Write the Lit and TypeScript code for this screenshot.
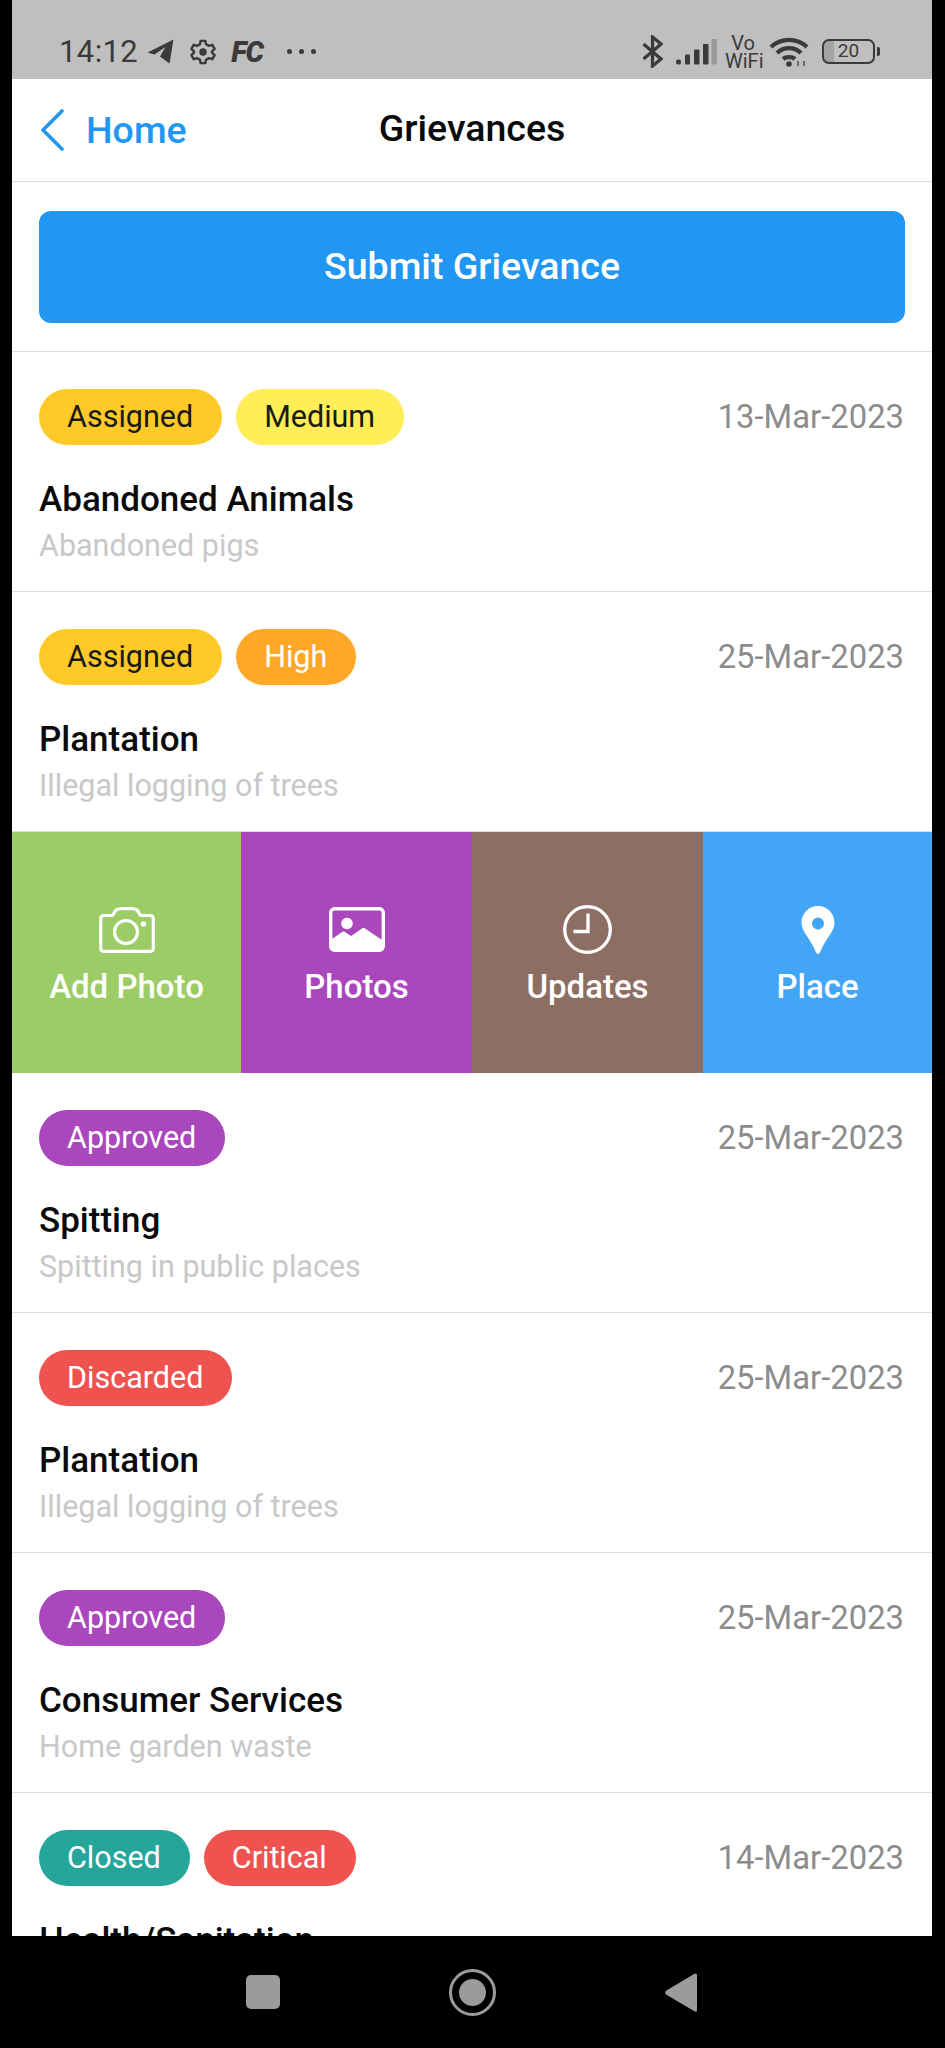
import { LitElement, html, css, svg } from 'lit';
import { customElement } from 'lit/decorators.js';

type Chip = { label: string; color: string; dark?: boolean };
type Grievance = { chips: Chip[]; date: string; title: string; desc?: string; actions?: boolean };

const ASSIGNED: Chip = { label: 'Assigned', color: '#ffca28', dark: true };
const MEDIUM: Chip = { label: 'Medium', color: '#ffee58', dark: true };
const HIGH: Chip = { label: 'High', color: '#ffa726' };
const APPROVED: Chip = { label: 'Approved', color: '#ab47bc' };
const DISCARDED: Chip = { label: 'Discarded', color: '#ef5350' };
const CLOSED: Chip = { label: 'Closed', color: '#26a69a' };
const CRITICAL: Chip = { label: 'Critical', color: '#ef5350' };

const grievances: Grievance[] = [
  { chips: [ASSIGNED, MEDIUM], date: '13-Mar-2023', title: 'Abandoned Animals', desc: 'Abandoned pigs' },
  { chips: [ASSIGNED, HIGH], date: '25-Mar-2023', title: 'Plantation', desc: 'Illegal logging of trees', actions: true },
  { chips: [APPROVED], date: '25-Mar-2023', title: 'Spitting', desc: 'Spitting in public places' },
  { chips: [DISCARDED], date: '25-Mar-2023', title: 'Plantation', desc: 'Illegal logging of trees' },
  { chips: [APPROVED], date: '25-Mar-2023', title: 'Consumer Services', desc: 'Home garden waste' },
  // last row runs under the nav bar, only the top of its title shows
  { chips: [CLOSED, CRITICAL], date: '14-Mar-2023', title: 'Health/Sanitation' },
];

const cameraIcon = svg`<svg width="56" height="46" viewBox="0 0 56 46" fill="none" stroke="#fff" stroke-width="3.200" stroke-linejoin="round">
  <path d="M5 8.500H12.500C13.500 8.500 14 8 14.500 7C16 3 19 1.700 22 1.700H33C36 1.700 39 3 40.500 7C41 8 41.500 8.500 42.500 8.500H51C53.500 8.500 54.300 9.500 54.300 12V41C54.300 43.500 53.500 44.300 51 44.300H5C2.500 44.300 1.700 43.500 1.700 41V12C1.700 9.500 2.500 8.500 5 8.500Z"/>
  <circle cx="27" cy="25" r="11.500"/>
  <circle cx="44.500" cy="17" r="2.800" fill="#fff" stroke="none"/>
</svg>`;

const photosIcon = svg`<svg width="56" height="45" viewBox="0 0 56 45">
  <rect x="1.700" y="1.700" width="52.600" height="41.600" rx="4" fill="none" stroke="#fff" stroke-width="3.400"/>
  <circle cx="18" cy="16.500" r="5.800" fill="#fff"/>
  <path d="M3 32L13 25C14 24.400 15 24.400 16 25L22 29L33 21.500C34 20.900 35 20.900 36 21.500L53 33V40C53 42.500 52 44 50 44H6C4 44 3 42.500 3 40Z" fill="#fff"/>
</svg>`;

const clockIcon = svg`<svg width="49" height="49" viewBox="0 0 49 49" fill="none" stroke="#fff" stroke-width="3.300">
  <circle cx="24.500" cy="24.500" r="22.800"/>
  <path d="M25 8.500V26.500H10.500"/>
</svg>`;

const pinIcon = svg`<svg width="34" height="48" viewBox="0 0 34 48">
  <path fill="#fff" fill-rule="evenodd" d="M17 0C7.600 0 0.500 7.400 0.500 17C0.500 26 10 33 15 46.500C15.700 48.300 18.300 48.300 19 46.500C24 33 33.500 26 33.500 17C33.500 7.400 26.400 0 17 0ZM17 11.500A6 6 0 1 1 17 23.500A6 6 0 1 1 17 11.500Z"/>
</svg>`;

const actions = [
  { label: 'Add Photo', color: '#9ccc65', icon: cameraIcon },
  { label: 'Photos', color: '#ab47bc', icon: photosIcon },
  { label: 'Updates', color: '#8d6e63', icon: clockIcon },
  { label: 'Place', color: '#42a5f5', icon: pinIcon },
];

@customElement('app-root')
export class AppRoot extends LitElement {
  static styles = css`
    :host {
      display: flex;
      flex-direction: column;
      height: 2048px;
      background: #000;
      font-family: Roboto, 'Liberation Sans', sans-serif;
      overflow: hidden;
    }
    .screen {
      flex: 1;
      min-height: 0;
      margin: 0 13px 0 12px;
      display: flex;
      flex-direction: column;
      background: #fff;
      overflow: hidden;
    }
    .status {
      flex: 0 0 79px;
      box-sizing: border-box;
      background: #bfbfbf;
      color: #3a3a3a;
      display: flex;
      align-items: center;
      padding: 24px 0 0 47px;
    }
    .time {
      font-size: 31px;
      letter-spacing: 0.4px;
    }
    .status svg {
      display: block;
      flex: none;
    }
    .plane {
      margin-left: 9px;
    }
    .gear {
      margin-left: 16px;
    }
    .fc {
      font-size: 29px;
      font-weight: 900;
      font-style: italic;
      margin-left: 15px;
      letter-spacing: -1px;
    }
    .dots {
      display: flex;
      gap: 7px;
      margin-left: 24px;
    }
    .dots i {
      width: 5px;
      height: 5px;
      border-radius: 50%;
      background: #3a3a3a;
    }
    .status-right {
      margin-left: auto;
      margin-right: 52px;
      display: flex;
      align-items: center;
      gap: 8px;
    }
    .signal {
      margin-left: 5px;
    }
    .vowifi {
      width: 36px;
      font-size: 20px;
      line-height: 18px;
      text-align: center;
      white-space: nowrap;
    }
    .battery {
      width: 53px;
      height: 25px;
      margin-left: 5px;
      box-sizing: border-box;
      border: 2.500px solid #3a3a3a;
      border-radius: 7px;
      font-size: 19px;
      line-height: 20px;
      text-align: center;
      background: linear-gradient(90deg, #a3a3a3 0 10px, transparent 10px);
    }
    .battery-tip {
      width: 3px;
      height: 9px;
      margin-left: -6px;
      background: #3a3a3a;
      border-radius: 0 2px 2px 0;
    }
    .header {
      flex: 0 0 103px;
      position: relative;
      display: flex;
      align-items: center;
      justify-content: center;
      border-bottom: 1.500px solid #dcdcdc;
      box-sizing: border-box;
    }
    .back {
      position: absolute;
      left: 28px;
      top: 29px;
      display: flex;
      align-items: center;
      gap: 22px;
      color: #2196f3;
      font-size: 37.500px;
      font-weight: 500;
    }
    .title {
      font-size: 37.500px;
      font-weight: 500;
      color: #0a0a0a;
      margin-top: -4px;
    }
    .submit-wrap {
      flex: none;
      padding: 29px 27px 27.500px;
      border-bottom: 1.500px solid #dcdcdc;
    }
    .submit {
      height: 112px;
      border-radius: 12px;
      background: #2196f3;
      color: #fff;
      font-size: 37.500px;
      font-weight: 500;
      display: flex;
      align-items: center;
      justify-content: center;
      padding-bottom: 2px;
      box-sizing: border-box;
    }
    .row {
      flex: none;
      box-sizing: border-box;
      height: 240px;
      padding: 37px 28px 0 27px;
      border-bottom: 1.500px solid #dcdcdc;
    }
    .row-top {
      display: flex;
      align-items: center;
      gap: 14px;
    }
    .chip {
      height: 56px;
      padding: 0 29px 0 28px;
      border-radius: 28px;
      color: #fff;
      font-size: 30.500px;
      display: flex;
      align-items: center;
    }
    .chip.dark {
      color: #1a1a1a;
    }
    .date {
      margin-left: auto;
      color: #8c8c8c;
      font-size: 32.800px;
    }
    .row-title {
      margin-top: 35px;
      font-size: 35px;
      line-height: 40px;
      font-weight: 500;
      color: #0a0a0a;
    }
    .row-desc {
      margin-top: 8px;
      font-size: 30.500px;
      line-height: 36px;
      color: #c8c8c8;
    }
    .strip {
      flex: none;
      height: 241px;
      display: grid;
      grid-template-columns: 229px 231px 231px 229px;
    }
    .action {
      display: flex;
      flex-direction: column;
      align-items: center;
      color: #fff;
      font-size: 33px;
      font-weight: 500;
      padding-top: 73px;
      box-sizing: border-box;
    }
    .action .icon {
      height: 50px;
      display: flex;
      align-items: center;
      margin-bottom: 12px;
    }
    .nav {
      flex: 0 0 112px;
      background: #000;
      display: flex;
      align-items: center;
      justify-content: center;
      gap: 169px;
      padding-right: 3px;
    }
    .nav svg {
      display: block;
    }
  `;

  render() {
    return html`
      <div class="screen">
        ${this.renderStatus()}
        <div class="header">
          <div class="back">
            <svg width="24" height="42" viewBox="0 0 24 42" fill="none" stroke="#2196f3" stroke-width="3.600" stroke-linecap="round" stroke-linejoin="round"><path d="M22 2L3 21L22 40"/></svg>
            <span>Home</span>
          </div>
          <div class="title">Grievances</div>
        </div>
        <div class="submit-wrap"><div class="submit">Submit Grievance</div></div>
        ${grievances.map((g) => html`
          <div class="row">
            <div class="row-top">
              ${g.chips.map((c) => html`<span class="chip ${c.dark ? 'dark' : ''}" style="background:${c.color}">${c.label}</span>`)}
              <span class="date">${g.date}</span>
            </div>
            <div class="row-title">${g.title}</div>
            ${g.desc ? html`<div class="row-desc">${g.desc}</div>` : ''}
          </div>
          ${g.actions ? this.renderStrip() : ''}
        `)}
      </div>
      <div class="nav">
        <svg width="34" height="34" viewBox="0 0 34 34"><rect width="34" height="34" rx="5" fill="#9b9b9b"/></svg>
        <svg width="47" height="47" viewBox="0 0 47 47"><circle cx="23.500" cy="23.500" r="22" fill="none" stroke="#9b9b9b" stroke-width="3"/><circle cx="23.500" cy="23.500" r="13.500" fill="#9b9b9b"/></svg>
        <svg width="32" height="39" viewBox="0 0 32 39"><path d="M32 2V37C32 39 30.500 39.300 29 38L1 21.500C0 20.800 0 18.500 1 17.800L29 1C30.500 0 32 0.300 32 2Z" fill="#9b9b9b"/></svg>
      </div>
    `;
  }

  private renderStrip() {
    return html`<div class="strip">
      ${actions.map((a) => html`
        <div class="action" style="background:${a.color}">
          <div class="icon">${a.icon}</div>
          <span>${a.label}</span>
        </div>`)}
    </div>`;
  }

  private renderStatus() {
    return html`<div class="status">
      <span class="time">14:12</span>
      <svg class="plane" width="27" height="25" viewBox="0 0 27 25"><path d="M0.500 13.500L26.500 0.500L22.500 24.500L13 17.500L18.500 8L7.500 15.500Z" fill="#3a3a3a"/></svg>
      <svg class="gear" width="26" height="26" viewBox="0 0 28 28" fill="none" stroke="#3a3a3a" stroke-width="2.600" stroke-linejoin="round"><path d="M11.500 2H16.500L17.300 5.600L20.400 7.400L24 6.300L26.500 10.700L23.700 13.300V14.700L26.500 17.300L24 21.700L20.400 20.600L17.300 22.400L16.500 26H11.500L10.700 22.400L7.600 20.600L4 21.700L1.500 17.300L4.300 14.700V13.300L1.500 10.700L4 6.300L7.600 7.400L10.700 5.600Z"/><circle cx="14" cy="14" r="4" fill="#3a3a3a" stroke="none"/></svg>
      <span class="fc">FC</span>
      <span class="dots"><i></i><i></i><i></i></span>
      <div class="status-right">
        <svg width="21" height="33" viewBox="0 0 21 33" fill="none" stroke="#3a3a3a" stroke-width="3.200"><path d="M1.500 9L19 24L10.500 31V2L19 9L1.500 24"/></svg>
        <svg class="signal" width="41" height="26" viewBox="0 0 41 26"><rect x="0" y="20.500" width="5" height="5" rx="2" fill="#3a3a3a"/><rect x="9" y="15.500" width="5" height="10" rx="1" fill="#3a3a3a"/><rect x="18" y="10.500" width="5.500" height="15" rx="1" fill="#3a3a3a"/><rect x="27" y="5" width="5.500" height="20.500" rx="1" fill="#3a3a3a"/><rect x="35.500" y="0" width="5.500" height="25.500" rx="1" fill="#9a9a9a"/></svg>
        <div class="vowifi">Vo<br />WiFi</div>
        <svg width="40" height="30" viewBox="0 0 40 30" fill="none" stroke="#3a3a3a" stroke-width="4.400"><path d="M2 10C12 0.500 28 0.500 38 10"/><path d="M8 16C15 9.500 25 9.500 32 16"/><path d="M14 22C17 19.500 23 19.500 26 22"/><circle cx="20" cy="27" r="2.800" fill="#3a3a3a" stroke="none"/><path d="M29 24V29M35 24V29" stroke="#6a6a6a" stroke-width="2"/></svg>
        <div class="battery">20</div>
        <div class="battery-tip"></div>
      </div>
    </div>`;
  }
}
